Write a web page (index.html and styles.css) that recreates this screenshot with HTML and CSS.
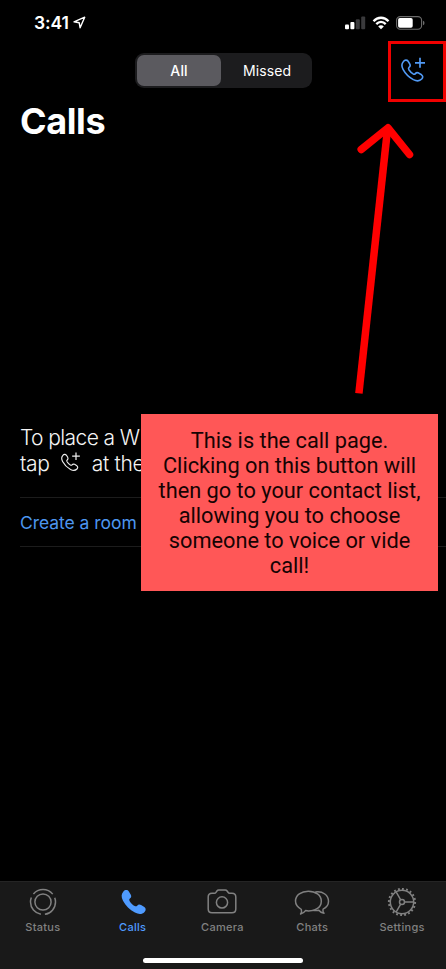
FILE: index.html
```html
<!DOCTYPE html>
<html lang="en">
<head>
<meta charset="utf-8">
<title>Calls</title>
<link rel="stylesheet" href="styles.css">
</head>
<body>
<svg class="defs" aria-hidden="true">
  <symbol id="handset" viewBox="0 0 24 24" overflow="visible">
    <path d="M2.6 2.4C4 .6 6.4 .6 7.6 2.2L9.3 5C10.2 6.6 9.9 7.8 8.6 8.8C7.8 9.5 7.8 10.2 8.4 11.2C9.6 13 11.2 14.6 13 15.7C14 16.2 14.7 16.1 15.3 15.4C16.3 14.2 17.4 14 18.9 14.8L21.9 16.6C23.5 17.8 23.6 19.6 22.1 21.2C19.8 23.6 16.8 23.6 13.2 21.8C8.4 19.2 4.6 15.3 2.2 10.8C.4 7.4 .6 4.6 2.6 2.4Z"/>
  </symbol>
</svg>
<div class="phone">
  <header class="status-bar">
    <div class="clock"><span>3:41</span>
      <svg class="location" viewBox="0 0 13 13"><path d="M1 5.8L11.7 1.2L7.1 11.8L6.2 6.7Z"/></svg>
    </div>
    <div class="indicators">
      <svg class="signal" viewBox="0 0 21 14"><rect x="0" y="8.5" width="4" height="4.7" rx="1"/><rect x="5.4" y="6" width="4" height="7.2" rx="1"/><rect class="off" x="10.8" y="3.3" width="4" height="9.9" rx="1"/><rect class="off" x="16.2" y=".5" width="4" height="12.7" rx="1"/></svg>
      <svg class="wifi" viewBox="0 0 18 14"><path d="M1.5 5.2C5.7 .6 12.3 .6 16.5 5.2M4.3 8.1C7 5.2 11 5.2 13.7 8.1"/><path class="dot" d="M6.2 10.4C7.8 8.9 10.2 8.9 11.8 10.4L9 13.2Z"/></svg>
      <svg class="battery" viewBox="0 0 29 14"><rect class="shell" x=".6" y=".6" width="25" height="12.6" rx="3.7"/><rect class="charge" x="2.1" y="2.1" width="14.6" height="9.6" rx="1.7"/><path class="cap" d="M27 4.7Q28.5 5.3 28.5 7T27 9.2Z"/></svg>
    </div>
  </header>
  <nav class="toolbar">
    <div class="segments"><span class="segment selected">All</span><span class="segment">Missed</span></div>
    <div class="highlight">
      <svg class="new-call" viewBox="0 0 26 26"><use href="#handset" x="0" y="2.2" width="22.5" height="22.5"/><path d="M19 .8V10.8M14 5.8H24"/></svg>
    </div>
  </nav>
  <h1>Calls</h1>
  <main>
    <p class="hint"><span class="line first">To place a W</span><span class="line second"><span>tap</span>
      <svg class="hint-icon" viewBox="0 0 26 26"><use href="#handset" x="0" y="2.2" width="22.5" height="22.5"/><path d="M19.5 .5V10.5M14.5 5.5H24.5"/></svg>
      <span>at the</span></span></p>
    <a class="room"><span>Create a room</span></a>
  </main>
  <nav class="tabs">
    <div class="tab"><svg viewBox="0 0 36 30"><circle cx="18" cy="15" r="8.1"/><circle cx="18" cy="15" r="12.5" pathLength="360" stroke-dasharray="101 19" stroke-dashoffset="-220"/></svg><span>Status</span></div>
    <div class="tab active"><svg viewBox="0 0 36 30"><use href="#handset" x="5.6" y="2" width="26" height="26"/></svg><span>Calls</span></div>
    <div class="tab camera"><svg viewBox="0 0 36 30"><path d="M8 6.2H10.4Q11.4 6.2 12 5.3L12.9 4Q13.6 3 14.8 3H21.2Q22.4 3 23.1 4L24 5.3Q24.6 6.2 25.6 6.2H28Q31.8 6.2 31.8 10V22Q31.8 25.8 28 25.8H8Q4.2 25.8 4.2 22V10Q4.2 6.2 8 6.2Z"/><circle cx="18" cy="15.4" r="5.6"/></svg><span>Camera</span></div>
    <div class="tab chats"><svg viewBox="0 0 36 30"><path d="M14.3 4.3C21.5 4.3 27.3 8.1 27.3 14.2C27.3 20.2 21.5 24 14.5 24C13.2 24 12.3 23.8 11.5 23.6C10 25.7 8.5 26.6 6.6 27C7.5 25.6 7.8 23.8 7.3 22.3C3.5 20.3 1.5 17.7 1.5 14.1C1.5 8.1 7.4 4.3 14.3 4.3Z"/><path d="M21.3 5C29 3.8 34.5 8.4 34.5 14.3C34.5 17.8 32.3 20.7 29.1 22.1C28.5 24 29 25.3 30 26.3C27.5 26 26 24.9 24.8 23.3C22.8 23.7 20.4 23.5 18.6 23.3"/></svg><span>Chats</span></div>
    <div class="tab settings"><svg viewBox="0 0 36 30"><circle cx="18" cy="15" r="11.7"/><circle class="teeth" cx="18" cy="15" r="13.1" pathLength="60" stroke-dasharray="1.35 1.65"/><circle cx="18" cy="15" r="2.5"/><path d="M20.5 15H29.7M16.7 12.8L12.1 4.9M16.7 17.2L12.1 25.1"/></svg><span>Settings</span></div>
    <div class="home-indicator"></div>
  </nav>
  <svg class="arrow" viewBox="0 0 60 275"><path class="shaft" d="M5.9 272.4L34.7 6.5"/><path class="head" d="M8.2 28.5L35 6.8L56.5 33.5"/></svg>
  <aside class="callout"><span>This is the call page.</span><span>Clicking on this button will</span><span>then go to your contact list,</span><span>allowing you to choose</span><span>someone to voice or vide</span><span>call!</span></aside>
</div>
</body>
</html>
```
FILE: styles.css
```css
* { box-sizing: border-box; }
body { margin: 0; background: #000; color: #fff; font-family: Inter, "Liberation Sans", sans-serif; }
.defs { position: absolute; width: 0; height: 0; }
svg { display: block; flex: none; fill: none; overflow: visible; }
.phone { position: relative; display: flex; flex-direction: column; width: 446px; height: 969px; overflow: hidden; background: #000; }
.status-bar { display: flex; justify-content: space-between; height: 41px; padding: 13px 21px 0 34px; }
.clock { display: flex; gap: 4px; font-size: 17.5px; font-weight: 600; line-height: 20px; letter-spacing: -.1px; }
.location { width: 13px; height: 13px; margin-top: 3px; stroke: #fff; stroke-width: 1.4; stroke-linejoin: round; }
.indicators { display: flex; padding-top: 3px; }
.signal { width: 21px; height: 14px; margin-right: 6px; fill: #fff; }
.signal .off { fill: #3a3a3c; }
.wifi { width: 18px; height: 14px; margin-right: 6px; stroke: #fff; stroke-width: 2.3; }
.wifi .dot { fill: #fff; stroke: none; }
.battery { width: 29px; height: 14px; }
.shell { stroke: #6b6b6b; stroke-width: 1.1; }
.charge { fill: #fff; }
.cap { fill: #6b6b6b; }
.toolbar { display: flex; justify-content: space-between; height: 61px; padding-left: 135px; }
.segments { display: flex; width: 177px; height: 35px; margin-top: 12px; padding: 2px; border-radius: 9px; background: #1c1c1e; }
.segment { flex: 1; padding: 6px 0 0 3px; border-radius: 7px; text-align: center; font-size: 14px; font-weight: 400; line-height: 20px; letter-spacing: .1px; }
.segment.selected { flex: 0 0 84px; padding-left: 0; background: #5b5a5f; font-weight: 500; }
.highlight { display: flex; width: 58px; height: 61px; padding: 13px 0 0 10px; border: 3px solid #f00000; }
.new-call { width: 26px; height: 26px; stroke: #519af5; stroke-width: 1.7; }
h1 { height: 44px; margin: -3px 0 0 20px; font-size: 36px; font-weight: 700; line-height: 44px; letter-spacing: -.4px; }
main { display: flex; flex-direction: column; flex: 1; padding: 282px 0 0 20px; }
.hint { height: 72px; margin: 0; font-size: 21px; font-weight: 300; line-height: 26px; color: #f4f4f4; }
.line { display: flex; white-space: nowrap; }
.first { letter-spacing: -.6px; }
.second { letter-spacing: -.3px; }
.hint-icon { width: 20px; height: 20px; margin: 1px 11px 0 11px; stroke: #eee; stroke-width: 1.6; }
.room { display: flex; align-items: center; height: 50px; border-top: 1px solid #1c1c1c; border-bottom: 1px solid #1c1c1c; color: #4d96ef; font-size: 17.5px; letter-spacing: -.05px; }
.tabs { position: relative; display: grid; grid-template-columns: repeat(5, 1fr); height: 88px; margin: 0 -1px 0 -2px; padding-top: 5px; border-top: 1px solid #242424; background: #191919; color: #818181; }
.tab { display: flex; flex-direction: column; align-items: center; font-size: 11px; font-weight: 500; line-height: 16px; letter-spacing: .3px; }
.tab svg { width: 36px; height: 30px; margin-bottom: 2px; stroke: currentColor; stroke-width: 1.5; stroke-linejoin: round; }
.tab.active { color: #4f9bff; }
.tab.active svg { fill: currentColor; stroke: none; }
.tab .teeth { stroke-width: 2; }
.home-indicator { position: absolute; bottom: 6px; left: 145px; width: 160px; height: 5px; border-radius: 3px; background: #fff; }
.arrow { position: absolute; top: 121px; left: 353px; width: 60px; height: 275px; stroke: #f00; stroke-width: 7.5; }
.head { stroke-linecap: round; stroke-linejoin: round; }
.callout { position: absolute; top: 414px; left: 141px; display: flex; flex-direction: column; align-items: center; width: 297px; height: 177px; padding-top: 14px; background: #ff5757; color: #160303; font: 400 21.75px/25px Roboto, "Liberation Sans", sans-serif; white-space: nowrap; }
```
